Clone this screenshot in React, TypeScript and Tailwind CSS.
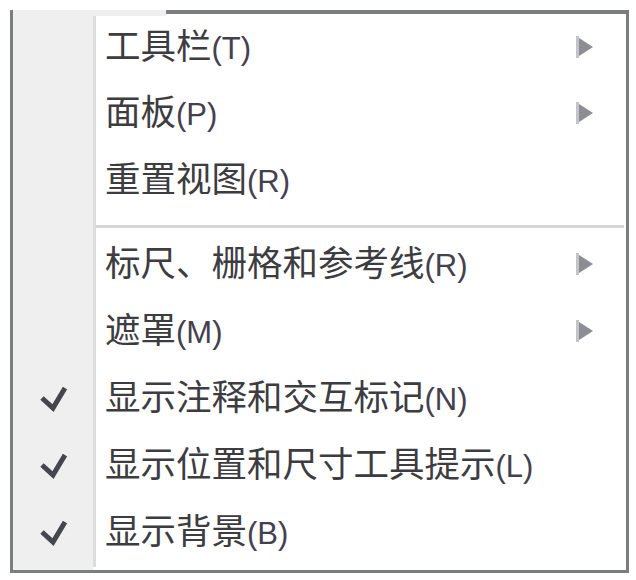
import React from "react";

type Item = {
  label: string;
  key: string;
  sub?: boolean;
  checked?: boolean;
};

const groupA: Item[] = [
  { label: "工具栏", key: "T", sub: true },
  { label: "面板", key: "P", sub: true },
  { label: "重置视图", key: "R" },
];

const groupB: Item[] = [
  { label: "标尺、栅格和参考线", key: "R", sub: true },
  { label: "遮罩", key: "M", sub: true },
  { label: "显示注释和交互标记", key: "N", checked: true },
  { label: "显示位置和尺寸工具提示", key: "L", checked: true },
  { label: "显示背景", key: "B", checked: true },
];

function Check() {
  return (
    <svg width="27" height="27" viewBox="0 0 27 27">
      <polyline
        points="2,13 13,23 25,3"
        fill="none"
        stroke="#45454d"
        strokeWidth="5"
        strokeLinejoin="miter"
      />
    </svg>
  );
}

function Arrow() {
  return (
    <svg width="17" height="22" viewBox="0 0 17 22">
      <polygon points="0,0 17,11 0,22" fill="#8d8d95" />
      <rect x="0" y="0" width="3" height="22" fill="#c4c4c8" />
    </svg>
  );
}

function Row({ item, first }: { item: Item; first?: boolean }) {
  return (
    <div className={`flex ${first ? "h-[65px]" : "h-[67px]"}`}>
      <div className="flex w-[83px] items-center justify-center border-r-[3px] border-[#dcdcdc] bg-[#efefef] pl-[1px] pb-[2px]">
        {item.checked && <Check />}
      </div>
      <div className="flex flex-1 items-center pl-[9px] pr-[33px]">
        <span className="flex-1 whitespace-nowrap pb-[8px] text-[35.5px] leading-none text-[#3c3c41]">
          {item.label}
          <span className="font-['Liberation_Sans',sans-serif] text-[31px] text-[#45404f]">
            ({item.key})
          </span>
        </span>
        {item.sub && (
          <span className="pb-[3px]">
            <Arrow />
          </span>
        )}
      </div>
    </div>
  );
}

export default function App() {
  return (
    <div className="h-[580px] w-[636px] bg-white pl-[10px] pt-[10px] font-['Noto_Sans_CJK_SC',sans-serif]">
      <div className="flex w-[619px] flex-col border-x-[3px] border-b-[3px] border-[#7c7d82] bg-white">
        <div className="flex h-[6px]">
          <div className="w-[153px] bg-[#efefef]" />
          <div className="flex-1 border-t-[4px] border-[#7c7d82] -mr-[3px]" />
        </div>
        {groupA.map((it, i) => (
          <Row key={it.label} item={it} first={i === 0} />
        ))}
        <div className="flex h-[17px]">
          <div className="w-[83px] border-r-[3px] border-[#dcdcdc] bg-[#efefef]" />
          <div className="flex-1 pr-[2px] pt-[10px]">
            <div className="h-[3px] bg-[#d6d6d6]" />
          </div>
        </div>
        {groupB.map((it) => (
          <Row key={it.label} item={it} />
        ))}
        <div className="flex h-[3px]">
          <div className="w-[80px] bg-[#efefef]" />
        </div>
      </div>
    </div>
  );
}
